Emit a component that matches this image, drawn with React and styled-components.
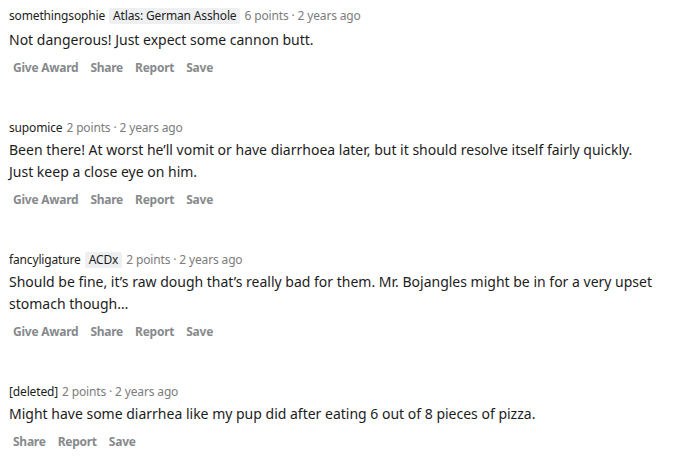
import React from 'react';
import styled, { createGlobalStyle } from 'styled-components';

const Global = createGlobalStyle`
body {
  margin: 0;
  background: #ffffff;
  font-family: "Noto Sans", "Open Sans", Arial, sans-serif;
}
`

const Thread = styled.div`
display: flex;
flex-direction: column;
gap: 40px;
padding: 8px 9px;
`

const Comment = styled.div`
display: flex;
flex-direction: column;
`

const Meta = styled.div`
display: flex;
align-items: center;
font-size: 12px;
line-height: 16px;
letter-spacing: -0.15px;
`

const Author = styled.span`
color: #1c1c1c;
margin-right: 4px;
`

const Flair = styled.span`
background: #edeff1;
color: #1c1c1c;
padding: 0 4px;
margin-right: 4px;
border-radius: 2px;
`

const Stamp = styled.span`
color: #7c7c7c;
`

const Body = styled.p`
margin: ${p => p.$roomy ? '5px' : '3px'} 0 0;
font-size: 14px;
line-height: 22px;
color: #1c1c1c;
max-width: 646px;
`

const Actions = styled.div`
display: flex;
gap: 4px;
margin-top: 5px;
`

const Action = styled.button`
border: none;
background: none;
padding: 4px;
font-family: inherit;
font-size: 12px;
font-weight: 700;
line-height: 16px;
color: #878a8c;
cursor: pointer;
letter-spacing: -0.25px;
`

const comments = [
  {
    author: 'somethingsophie',
    flair: 'Atlas: German Asshole',
    points: '6 points',
    text: 'Not dangerous! Just expect some cannon butt.',
    actions: ['Give Award', 'Share', 'Report', 'Save'],
  },
  {
    author: 'supomice',
    points: '2 points',
    text: "Been there! At worst he\u2019ll vomit or have diarrhoea later, but it should resolve itself fairly quickly. Just keep a close eye on him.",
    actions: ['Give Award', 'Share', 'Report', 'Save'],
  },
  {
    author: 'fancyligature',
    flair: 'ACDx',
    points: '2 points',
    text: "Should be fine, it\u2019s raw dough that\u2019s really bad for them. Mr. Bojangles might be in for a very upset stomach though\u2026",
    actions: ['Give Award', 'Share', 'Report', 'Save'],
  },
  {
    author: '[deleted]',
    points: '2 points',
    text: 'Might have some diarrhea like my pup did after eating 6 out of 8 pieces of pizza.',
    actions: ['Share', 'Report', 'Save'],
  },
];

function App() {
  return (
    <>
      <Global />
      <Thread>
        {comments.map((c, i) => (
          <Comment key={i}>
            <Meta>
              <Author>{c.author}</Author>
              {c.flair && <Flair>{c.flair}</Flair>}
              <Stamp>{c.points} · 2 years ago</Stamp>
            </Meta>
            <Body $roomy={i === 0}>{c.text}</Body>
            <Actions>
              {c.actions.map(a => <Action key={a}>{a}</Action>)}
            </Actions>
          </Comment>
        ))}
      </Thread>
    </>
  );
}

export default App;
